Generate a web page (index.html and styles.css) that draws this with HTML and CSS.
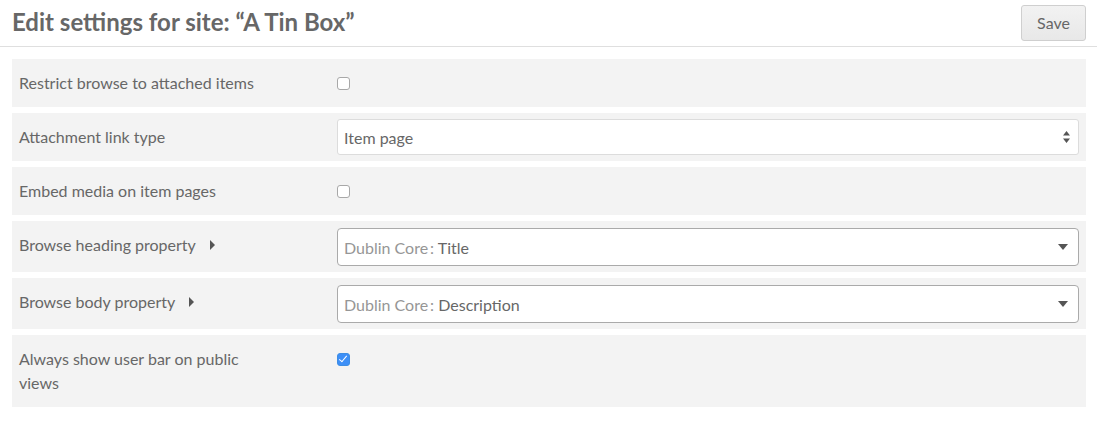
FILE: index.html
```html
<!DOCTYPE html>
<html>
<head>
<meta charset="utf-8">
<link rel="stylesheet" href="styles.css">
</head>
<body>
<div class="page">
  <header class="page-header">
    <h1 class="title">Edit settings for site: “A Tin Box”</h1>
    <button class="btn-save">Save</button>
  </header>
  <div class="fields">
    <div class="field">
      <div class="field-meta"><label>Restrict browse to attached items</label></div>
      <div class="inputs"><input type="checkbox" class="check"></div>
    </div>
    <div class="field">
      <div class="field-meta"><label>Attachment link type</label></div>
      <div class="inputs">
        <div class="select native">
          <span class="select-text">Item page</span>
          <svg class="updown" width="7" height="12" viewBox="0 0 7 12"><path d="M3.5 0 L7 4.5 L0 4.5 Z M0 7.5 L7 7.5 L3.5 12 Z" fill="#555"/></svg>
        </div>
      </div>
    </div>
    <div class="field">
      <div class="field-meta"><label>Embed media on item pages</label></div>
      <div class="inputs"><input type="checkbox" class="check"></div>
    </div>
    <div class="field">
      <div class="field-meta"><label>Browse heading property</label><span class="caret"></span></div>
      <div class="inputs">
        <div class="select chosen">
          <span class="select-text"><span class="vocab">Dublin Core<span class="colon">:</span></span> Title</span>
          <svg class="down" width="10" height="6" viewBox="0 0 10 6"><path d="M0 0 L10 0 L5 6 Z" fill="#555"/></svg>
        </div>
      </div>
    </div>
    <div class="field">
      <div class="field-meta"><label>Browse body property</label><span class="caret"></span></div>
      <div class="inputs">
        <div class="select chosen">
          <span class="select-text"><span class="vocab">Dublin Core<span class="colon">:</span></span> Description</span>
          <svg class="down" width="10" height="6" viewBox="0 0 10 6"><path d="M0 0 L10 0 L5 6 Z" fill="#555"/></svg>
        </div>
      </div>
    </div>
    <div class="field">
      <div class="field-meta"><label class="narrow">Always show user bar on public views</label></div>
      <div class="inputs"><input type="checkbox" class="check" checked></div>
    </div>
  </div>
</div>
</body>
</html>
```
FILE: styles.css
```css
* { box-sizing: border-box; }
html, body { margin: 0; padding: 0; background: #fff; }
body {
  font-family: Lato, "Open Sans", "Liberation Sans", sans-serif;
  color: #676767;
  font-size: 16px;
}
.page-header {
  display: flex;
  align-items: center;
  justify-content: space-between;
  height: 47px;
  padding: 0 11px 0 12px;
  border-bottom: 1px solid #dfdfdf;
}
.title {
  margin: 0;
  font-size: 24px;
  font-weight: 700;
  color: #676767;
  line-height: 32px;
  margin-top: -2px;
}
.btn-save {
  font-family: inherit;
  font-size: 16px;
  color: #676767;
  height: 36px;
  width: 65px;
  background: linear-gradient(#f2f2f2, #e8e8e8);
  border: 1px solid #cfcfcf;
  border-radius: 3px;
  margin-top: -1px;
  padding: 0;
}
.fields {
  padding: 12px 11px 0 12px;
  display: flex;
  flex-direction: column;
  gap: 6px;
}
.field {
  background: #f3f3f3;
  display: flex;
  padding: 6px 7px;
  min-height: 48px;
}
.field-meta {
  width: 30%;
  display: flex;
  align-items: flex-start;
  padding: 6px 0;
}
.field-meta label {
  line-height: 24px;
  display: block;
}
.field-meta label.narrow { max-width: 250px; }
.caret {
  display: inline-block;
  width: 0; height: 0;
  border-top: 5px solid transparent;
  border-bottom: 5px solid transparent;
  border-left: 5px solid #555;
  margin-left: 14px;
  margin-top: 7px;
}
.inputs {
  width: 70%;
  display: flex;
  align-items: flex-start;
}
.check {
  appearance: none;
  -webkit-appearance: none;
  width: 13px;
  height: 13px;
  margin: 12px 0 0 0;
  border: 1px solid #a8a8a8;
  border-radius: 3px;
  background: #fff;
  position: relative;
}
.check:checked {
  background: #3d8ff7;
  border-color: #3d8de4;
}
.check:checked::after {
  content: "";
  position: absolute;
  left: 3px;
  top: 0px;
  width: 3px;
  height: 7px;
  border: solid #fff;
  border-width: 0 1.5px 1.5px 0;
  transform: rotate(40deg);
}
.select {
  flex: 1;
  display: flex;
  align-items: center;
  justify-content: space-between;
  background: #fff;
}
.select.native {
  height: 36px;
  border: 1px solid #dcdcdc;
  border-radius: 3px;
  padding: 0 8px 0 6px;
}
.select.chosen {
  height: 38px;
  margin-top: 1px;
  border: 1px solid #aaa;
  border-radius: 4px;
  padding: 0 10px 0 6px;
}
.vocab { color: #969696; }
.colon { margin-left: 2px; }
.select-text { color: #676767; }
```
